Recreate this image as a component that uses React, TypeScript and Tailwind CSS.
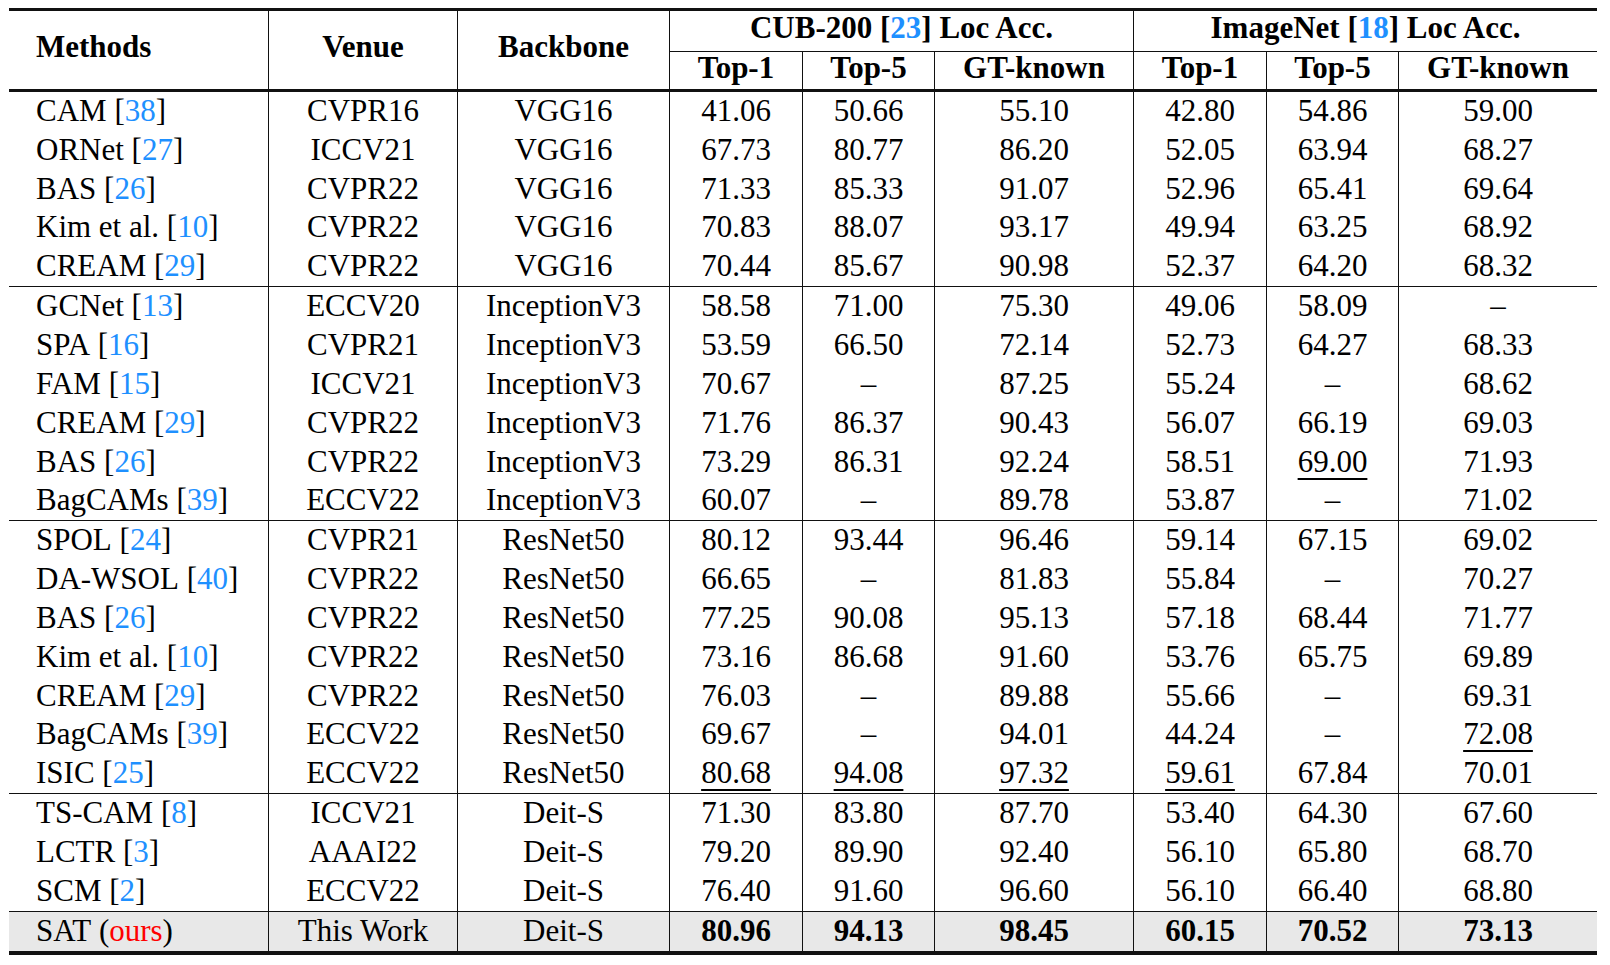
import React from "react";

// column layout shared by header and body rows
const COLS =
  "grid grid-cols-[259px_189px_212px_133px_132px_199px_133px_132px_199px]";

type Row = [string, string | null, string, string, string[]];

// "u:" marks an underlined (second best) value
const groups: Row[][] = [
  [
    ["CAM", "38", "CVPR16", "VGG16", ["41.06", "50.66", "55.10", "42.80", "54.86", "59.00"]],
    ["ORNet", "27", "ICCV21", "VGG16", ["67.73", "80.77", "86.20", "52.05", "63.94", "68.27"]],
    ["BAS", "26", "CVPR22", "VGG16", ["71.33", "85.33", "91.07", "52.96", "65.41", "69.64"]],
    ["Kim et al.", "10", "CVPR22", "VGG16", ["70.83", "88.07", "93.17", "49.94", "63.25", "68.92"]],
    ["CREAM", "29", "CVPR22", "VGG16", ["70.44", "85.67", "90.98", "52.37", "64.20", "68.32"]],
  ],
  [
    ["GCNet", "13", "ECCV20", "InceptionV3", ["58.58", "71.00", "75.30", "49.06", "58.09", "–"]],
    ["SPA", "16", "CVPR21", "InceptionV3", ["53.59", "66.50", "72.14", "52.73", "64.27", "68.33"]],
    ["FAM", "15", "ICCV21", "InceptionV3", ["70.67", "–", "87.25", "55.24", "–", "68.62"]],
    ["CREAM", "29", "CVPR22", "InceptionV3", ["71.76", "86.37", "90.43", "56.07", "66.19", "69.03"]],
    ["BAS", "26", "CVPR22", "InceptionV3", ["73.29", "86.31", "92.24", "58.51", "u:69.00", "71.93"]],
    ["BagCAMs", "39", "ECCV22", "InceptionV3", ["60.07", "–", "89.78", "53.87", "–", "71.02"]],
  ],
  [
    ["SPOL", "24", "CVPR21", "ResNet50", ["80.12", "93.44", "96.46", "59.14", "67.15", "69.02"]],
    ["DA-WSOL", "40", "CVPR22", "ResNet50", ["66.65", "–", "81.83", "55.84", "–", "70.27"]],
    ["BAS", "26", "CVPR22", "ResNet50", ["77.25", "90.08", "95.13", "57.18", "68.44", "71.77"]],
    ["Kim et al.", "10", "CVPR22", "ResNet50", ["73.16", "86.68", "91.60", "53.76", "65.75", "69.89"]],
    ["CREAM", "29", "CVPR22", "ResNet50", ["76.03", "–", "89.88", "55.66", "–", "69.31"]],
    ["BagCAMs", "39", "ECCV22", "ResNet50", ["69.67", "–", "94.01", "44.24", "–", "u:72.08"]],
    ["ISIC", "25", "ECCV22", "ResNet50", ["u:80.68", "u:94.08", "u:97.32", "u:59.61", "67.84", "70.01"]],
  ],
  [
    ["TS-CAM", "8", "ICCV21", "Deit-S", ["71.30", "83.80", "87.70", "53.40", "64.30", "67.60"]],
    ["LCTR", "3", "AAAI22", "Deit-S", ["79.20", "89.90", "92.40", "56.10", "65.80", "68.70"]],
    ["SCM", "2", "ECCV22", "Deit-S", ["76.40", "91.60", "96.60", "56.10", "66.40", "68.80"]],
  ],
];

const ours = ["80.96", "94.13", "98.45", "60.15", "70.52", "73.13"];

function Cite({ n }: { n: string }) {
  return (
    <>
      [<span className="text-[#1e90ff]">{n}</span>]
    </>
  );
}

function Cell({ children, first = false }: { children: React.ReactNode; first?: boolean }) {
  return (
    <div
      className={
        first
          ? "flex items-center pl-[27px] pb-[2px] whitespace-nowrap"
          : "flex items-center justify-center pb-[2px] border-l border-[#111] whitespace-nowrap"
      }
    >
      {children}
    </div>
  );
}

function Value({ v }: { v: string }) {
  if (v.startsWith("u:")) {
    return (
      <span className="underline decoration-[1.5px] underline-offset-[6px]">{v.slice(2)}</span>
    );
  }
  return <span>{v}</span>;
}

export default function App() {
  return (
    <div className="min-h-screen bg-white font-['Liberation_Serif','Times_New_Roman',serif] text-[31px] leading-none text-black">
      <div className="ml-[9px] pt-[8px] w-[1588px]">
        {/* header */}
        <div
          className={`${COLS} grid-rows-[41px_37px] border-t-[3px] border-b-[3px] border-[#111] font-bold`}
        >
          <div className="row-span-2 flex items-center pl-[27px] pb-[8px]">Methods</div>
          <div className="row-span-2 flex items-center justify-center pb-[8px] border-l border-[#111]">
            Venue
          </div>
          <div className="row-span-2 flex items-center justify-center pb-[8px] border-l border-[#111]">
            Backbone
          </div>
          <div className="col-span-3 flex items-center justify-center pb-[8px] border-l border-b border-[#111]">
            CUB-200&nbsp;<Cite n="23" />&nbsp;Loc Acc.
          </div>
          <div className="col-span-3 flex items-center justify-center pb-[8px] border-l border-b border-[#111]">
            ImageNet&nbsp;<Cite n="18" />&nbsp;Loc Acc.
          </div>
          {["Top-1", "Top-5", "GT-known", "Top-1", "Top-5", "GT-known"].map((h, i) => (
            <div key={i} className="flex items-center justify-center pb-[6px] border-l border-[#111]">
              {h}
            </div>
          ))}
        </div>

        {/* body groups */}
        {groups.map((rows, gi) => (
          <div key={gi} className={gi > 0 ? "border-t border-[#111]" : ""}>
            {rows.map((r, ri) => (
              <div key={ri} className={`${COLS} h-[38.85px]`}>
                <Cell first>
                  {r[0]}&nbsp;<Cite n={r[1] as string} />
                </Cell>
                <Cell>{r[2]}</Cell>
                <Cell>{r[3]}</Cell>
                {r[4].map((v, vi) => (
                  <Cell key={vi}>
                    <Value v={v} />
                  </Cell>
                ))}
              </div>
            ))}
          </div>
        ))}

        {/* our method */}
        <div className={`${COLS} h-[44px] bg-[#e8e8e8] border-t border-b-[4px] border-[#111]`}>
          <Cell first>
            SAT&nbsp;(<span className="text-[#ff0000]">ours</span>)
          </Cell>
          <Cell>This Work</Cell>
          <Cell>Deit-S</Cell>
          {ours.map((v, i) => (
            <Cell key={i}>
              <span className="font-bold">{v}</span>
            </Cell>
          ))}
        </div>
      </div>
    </div>
  );
}
